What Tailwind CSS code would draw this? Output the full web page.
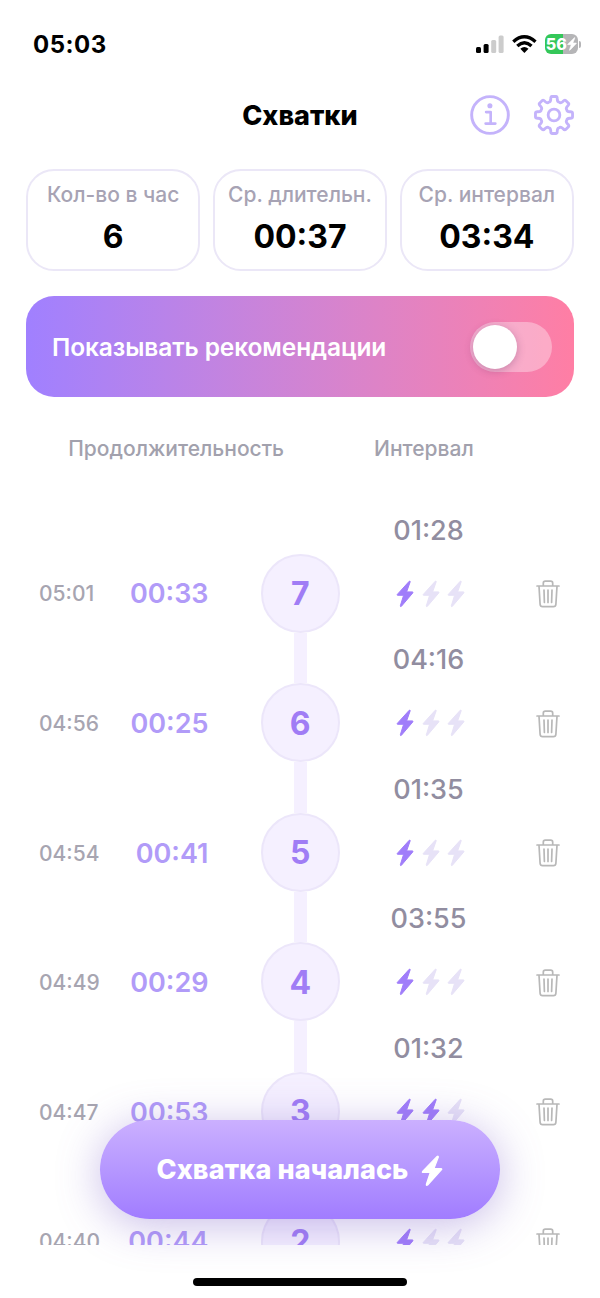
<!DOCTYPE html>
<html lang="ru">
<head>
<meta charset="utf-8">
<title>Схватки</title>
<script src="https://cdn.jsdelivr.net/npm/@tailwindcss/browser@4"></script>
</head>
<body class="bg-white">
<svg class="hidden">
  <symbol id="bolt" viewBox="0 0 18 28"><path d="M13.2 1.3 1.3 14.4q-.6.9.5.9H7.6L4.4 25.6q-.2 1.6 1 .7L16.8 12.9q.6-1-.5-1H10.600L14.200 1.800q0-1.200-1-.5Z" fill="currentColor" stroke="currentColor" stroke-width="1" stroke-linejoin="round"/></symbol>
  <symbol id="trash" viewBox="0 0 24 28"><g fill="none" stroke="currentColor" stroke-width="1.700" stroke-linecap="round" stroke-linejoin="round"><path d="M1 6H23M7.300 6V3.200Q7.300 1.200 9.300 1.200H14.700Q16.700 1.200 16.700 3.200V6M3 6.300 4.100 24.300Q4.300 26.700 6.600 26.700H17.400Q19.700 26.700 19.900 24.300L21 6.300M8 10 8.400 22.500M12 10V22.500M16 10 15.600 22.500"/></g></symbol>
</svg>
<div class="flex h-[1298px] w-[600px] flex-col overflow-hidden bg-white font-['Inter',sans-serif]">
  <div class="flex h-[88px] shrink-0 items-center justify-between pr-[19px] pl-[33px]">
    <div class="pt-px text-[24px] font-bold tracking-[0.5px]">05:03</div>
    <div class="flex items-center">
      <svg class="h-[18px] w-[28px]" viewBox="0 0 28 18"><rect x="0" y="12" width="5" height="6" rx="1.500"/><rect x="7.600" y="9" width="5" height="9" rx="1.500"/><g fill="#cccccc"><rect x="15.200" y="5" width="5" height="13" rx="1.500"/><rect x="22.600" y="0.500" width="5" height="17.500" rx="1.500"/></g></svg>
      <svg class="ml-2 h-[18px] w-[25px]" viewBox="0 0 25 18"><g fill="none" stroke="#000" stroke-width="3.400"><path d="M1.300 6.700Q12.300-3 23.500 6.700"/><path d="M5.300 10.900Q12.400 4.600 19.500 10.900"/></g><path d="M8.300 13.700Q12.400 10.400 16.500 13.700L12.400 17.900Z"/></svg>
      <div class="ml-[8px] flex items-center">
        <div class="flex h-[20px] w-[33.500px] items-center justify-center rounded-[6px] bg-linear-to-r from-[#34c759] from-56% to-[#b5b5b7] to-56% text-white">
          <span class="text-[16px] leading-none font-extrabold">56</span>
          <svg class="h-[14px] w-[10px]" viewBox="0 0 18 28" preserveAspectRatio="none"><use href="#bolt"/></svg>
        </div>
        <div class="ml-px h-[7px] w-[2px] rounded-r-full bg-[#b5b5b7]"></div>
      </div>
    </div>
  </div>

  <div class="grid h-[56px] shrink-0 grid-cols-[1fr_auto_1fr] items-center px-[26px]">
    <h1 class="col-start-2 pt-px text-[27px] font-extrabold">Схватки</h1>
    <div class="flex items-center justify-end gap-[24px] pb-[2px] text-[#c4b3fb]">
      <svg class="h-[40px] w-[40px]" viewBox="0 0 41 41" fill="none" stroke="currentColor"><circle cx="20.500" cy="20.500" r="18.800" stroke-width="3"/><circle cx="20.400" cy="11" r="2.600" fill="currentColor" stroke="none"/><path d="M16.500 17.500H21.200V29M16 29.300H26" stroke-width="2.700" stroke-linecap="round" stroke-linejoin="round"/></svg>
      <svg class="h-[40px] w-[40px]" viewBox="0 0 41 41" fill="none" stroke="currentColor" stroke-width="2.900" stroke-linejoin="round"><circle cx="20.500" cy="20.500" r="6"/><path id="gear"/></svg>
    </div>
  </div>

  <div class="mt-[25px] grid h-[102px] shrink-0 grid-cols-3 gap-[12.500px] px-[26px] text-center">
    <div class="flex flex-col items-center rounded-[28px] border-2 border-[#ebe7f7] pt-[11px]">
      <div class="text-[21px] leading-[26px] font-medium whitespace-nowrap text-[#a7a3b4]">Кол-во в час</div>
      <div class="mt-[11px] text-[32px] leading-[36px] font-bold">6</div>
    </div>
    <div class="flex flex-col items-center rounded-[28px] border-2 border-[#ebe7f7] pt-[11px]">
      <div class="text-[21px] leading-[26px] font-medium whitespace-nowrap text-[#a7a3b4]">Ср. длительн.</div>
      <div class="mt-[11px] text-[32px] leading-[36px] font-bold">00:37</div>
    </div>
    <div class="flex flex-col items-center rounded-[28px] border-2 border-[#ebe7f7] pt-[11px]">
      <div class="text-[21px] leading-[26px] font-medium whitespace-nowrap text-[#a7a3b4]">Ср. интервал</div>
      <div class="mt-[11px] text-[32px] leading-[36px] font-bold">03:34</div>
    </div>
  </div>

  <div class="mx-[26px] mt-[25px] flex h-[101px] shrink-0 items-center justify-between rounded-[28px] bg-linear-to-r from-[#a080ff] to-[#ff7ea4] pr-[22px] pl-[26px]">
    <div class="pt-[2px] text-[24.5px] font-semibold tracking-[-0.1px] whitespace-nowrap text-white">Показывать рекомендации</div>
    <div class="flex h-[50px] w-[82px] items-center rounded-full bg-white/35 pl-[3px]">
      <div class="size-[44px] rounded-full bg-white shadow-[0_2px_8px_rgba(90,40,90,0.3)]"></div>
    </div>
  </div>

  <div class="mt-[39px] grid h-[26px] shrink-0 grid-cols-[284px_1fr] text-[21px] leading-[26px] font-medium text-[#a2a1ad]">
    <div class="text-right">Продолжительность</div>
    <div class="pl-[90px]">Интервал</div>
  </div>

  <ul id="list" class="mt-[41px] h-[742px] shrink-0 overflow-hidden"></ul>

  <div class="relative z-10 mt-[-125px] flex h-[99px] w-[400px] shrink-0 items-center justify-center gap-[13px] self-center rounded-full bg-linear-to-b from-[#cbb0ff] to-[#a17cff] pt-[2px] text-white shadow-[0_6px_44px_rgba(125,95,200,0.42)]">
    <span class="text-[27px] font-extrabold tracking-[0.1px] whitespace-nowrap">Схватка началась</span>
    <svg class="h-[32px] w-[22px]" viewBox="0 0 18 28" preserveAspectRatio="none"><use href="#bolt"/></svg>
  </div>
  <div class="mt-[59px] h-[8px] w-[214px] shrink-0 self-center rounded-full bg-black"></div>
</div>
<script>
const rows = [
  [7,'05:01','00:33','01:28',1],
  [6,'04:56','00:25','04:16',1],
  [5,'04:54','00:41','01:35',1],
  [4,'04:49','00:29','03:55',1],
  [3,'04:47','00:53','01:32',2],
  [2,'04:40','00:44','',1]
];
const bolt = on => `<svg class="h-[28px] w-[18px] ${on ? 'text-[#a07dfa]' : 'text-[#e7e2f7]'}" viewBox="0 0 18 28" preserveAspectRatio="none"><use href="#bolt"/></svg>`;
document.getElementById('list').innerHTML = rows.map(([n,time,dur,gap,level], i) => `
<li class="grid h-[129.6px] grid-cols-[110px_98.5px_183.5px_73px_1fr] items-end">
  <div class="flex h-[79px] items-center pt-[2px] pl-[39px] text-[21px] font-medium text-[#a7a5b1]"><span>${time}</span></div>
  <div class="flex h-[79px] items-center justify-end pt-[3px] text-[27px] font-semibold text-[#b19bf8]"><span>${dur}</span></div>
  <div class="flex flex-col items-center">
    <div class="h-[50.6px] w-[13px] ${i ? 'bg-[#f5f0ff]' : 'bg-transparent'}"></div>
    <div class="flex size-[79px] items-center justify-center rounded-full border-2 border-[#ece6fa] bg-[#f5f0ff] pt-[2px] text-[32px] font-bold text-[#a07df5]">${n}</div>
  </div>
  <div class="flex flex-col items-center">
    <div class="flex h-[50.6px] items-center pt-[5px] text-[27px] font-medium text-[#918da0]">${gap}</div>
    <div class="flex h-[79px] items-center gap-[7.500px] pt-px pl-[4px]">${[0,1,2].map(k => bolt(k < level)).join('')}</div>
  </div>
  <div class="flex h-[79px] items-center pt-[2px] pl-[71px] text-[#b8b8b8]"><svg class="h-[28px] w-[24px]" viewBox="0 0 24 28"><use href="#trash"/></svg></div>
</li>`).join('');

// Eight flat-topped teeth joined by curved valleys
const at = (deg, r) => {
  const t = (deg - 90) * Math.PI / 180;
  return (20.5 + r * Math.cos(t)).toFixed(2) + ' ' + (20.5 + r * Math.sin(t)).toFixed(2);
};
let d = '';
for (let k = 0; k < 8; k++) {
  const c = k * 45;
  d += (k ? 'L' : 'M') + at(c - 11.5, 16.6) + 'Q' + at(c - 10.5, 19.2) + ' ' + at(c - 6, 19.1)
     + 'L' + at(c + 6, 19.1) + 'Q' + at(c + 10.5, 19.2) + ' ' + at(c + 11.5, 16.6)
     + 'Q' + at(c + 15, 13.6) + ' ' + at(c + 22.5, 14.2) + 'Q' + at(c + 30, 13.6) + ' ' + at(c + 33.5, 16.6);
}
document.getElementById('gear').setAttribute('d', d + 'Z');
</script>
</body>
</html>
